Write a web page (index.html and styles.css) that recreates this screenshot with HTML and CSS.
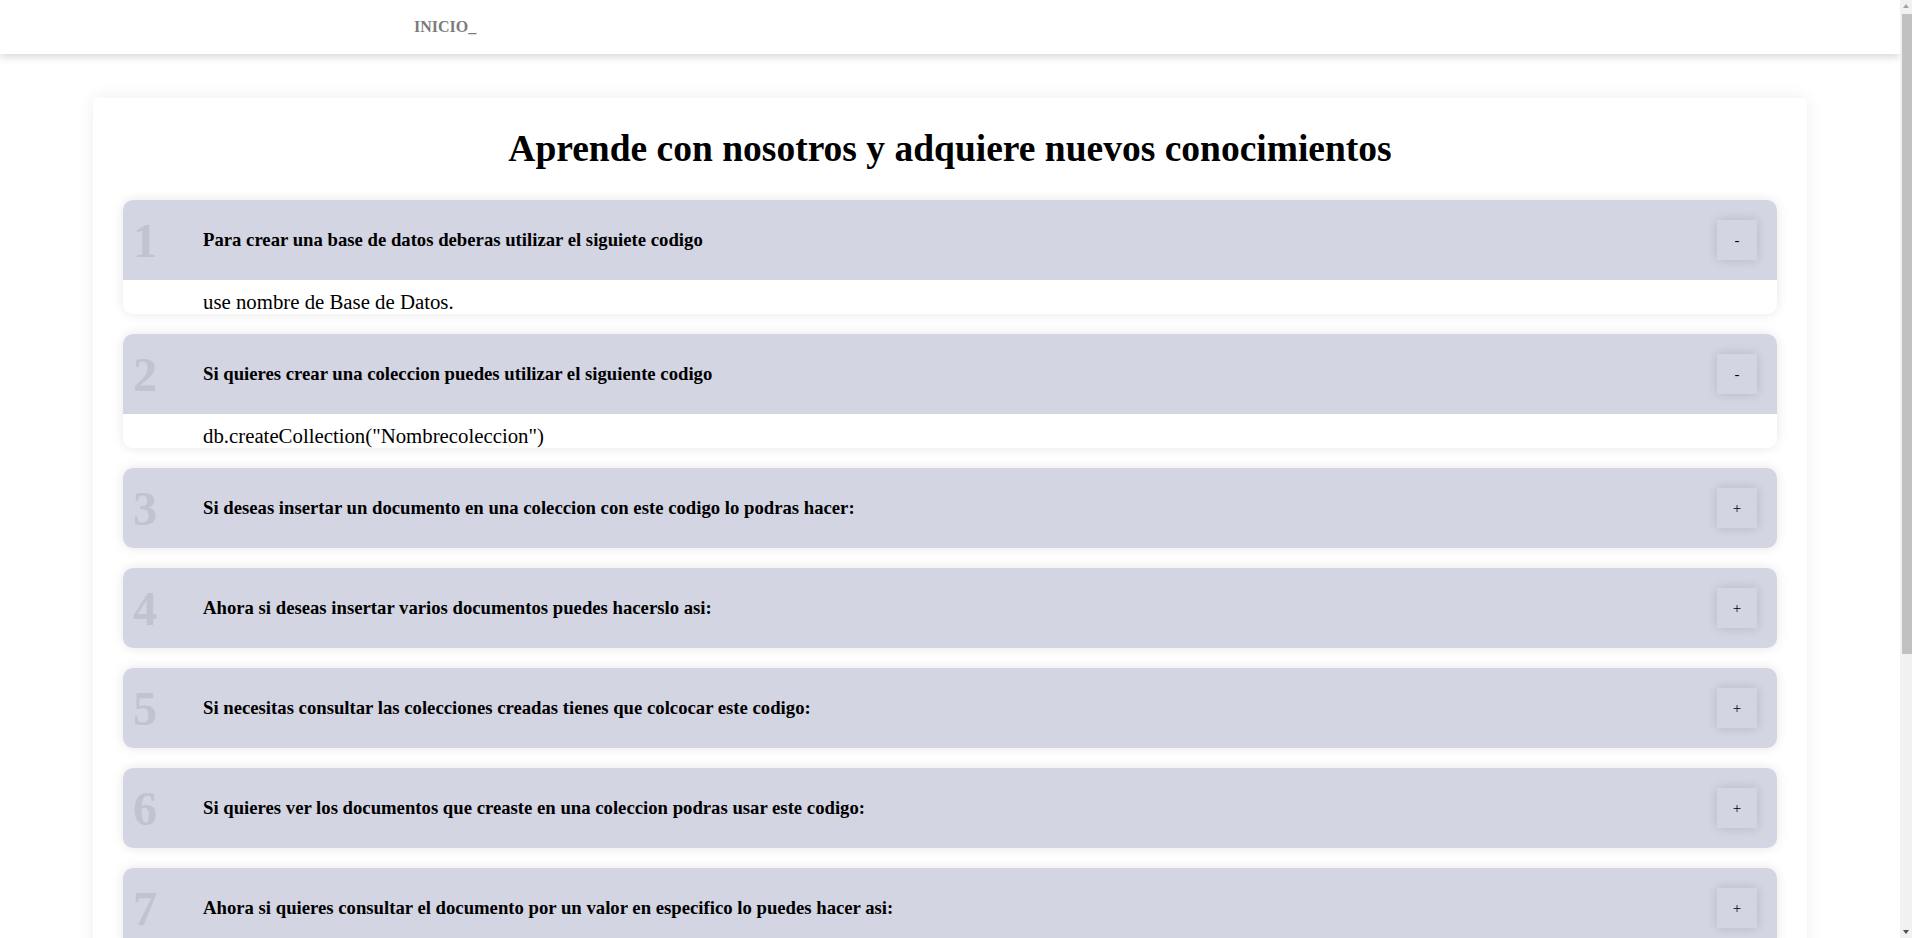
FILE: index.html
```html
<!DOCTYPE html>
<html lang="es">
<head>
<meta charset="utf-8">
<title>Aprende</title>
<link rel="stylesheet" href="styles.css">
</head>
<body>
<div class="page">
  <nav class="navbar">
    <a class="nav-link" href="#">INICIO_</a>
  </nav>
  <main class="card">
    <h1 class="title">Aprende con nosotros y adquiere nuevos conocimientos</h1>
    <div class="list">
      <div class="item open">
        <div class="item-head"><span class="num">1</span><h3 class="q">Para crear una base de datos deberas utilizar el siguiete codigo</h3><button class="toggle">-</button></div>
        <div class="item-body"><p>use nombre de Base de Datos.</p></div>
      </div>
      <div class="item open">
        <div class="item-head"><span class="num">2</span><h3 class="q">Si quieres crear una coleccion puedes utilizar el siguiente codigo</h3><button class="toggle">-</button></div>
        <div class="item-body"><p>db.createCollection("Nombrecoleccion")</p></div>
      </div>
      <div class="item">
        <div class="item-head"><span class="num">3</span><h3 class="q">Si deseas insertar un documento en una coleccion con este codigo lo podras hacer:</h3><button class="toggle">+</button></div>
      </div>
      <div class="item">
        <div class="item-head"><span class="num">4</span><h3 class="q">Ahora si deseas insertar varios documentos puedes hacerslo asi:</h3><button class="toggle">+</button></div>
      </div>
      <div class="item">
        <div class="item-head"><span class="num">5</span><h3 class="q">Si necesitas consultar las colecciones creadas tienes que colcocar este codigo:</h3><button class="toggle">+</button></div>
      </div>
      <div class="item">
        <div class="item-head"><span class="num">6</span><h3 class="q">Si quieres ver los documentos que creaste en una coleccion podras usar este codigo:</h3><button class="toggle">+</button></div>
      </div>
      <div class="item">
        <div class="item-head"><span class="num">7</span><h3 class="q">Ahora si quieres consultar el documento por un valor en especifico lo puedes hacer asi:</h3><button class="toggle">+</button></div>
      </div>
      <div class="item">
        <div class="item-head"><span class="num">8</span><h3 class="q">Si quieres actualizar un documento puedes utilizar este codigo:</h3><button class="toggle">+</button></div>
      </div>
      <div class="item">
        <div class="item-head"><span class="num">9</span><h3 class="q">Si deseas eliminar un documento lo puedes hacer asi:</h3><button class="toggle">+</button></div>
      </div>
      <div class="item">
        <div class="item-head"><span class="num">10</span><h3 class="q">Para eliminar una coleccion deberas utilizar el siguiente codigo:</h3><button class="toggle">+</button></div>
      </div>
    </div>
  </main>
</div>
<div class="scrollbar" aria-hidden="true">
  <div class="sb-arrow sb-up"></div>
  <div class="sb-track"><div class="sb-thumb"></div></div>
  <div class="sb-arrow sb-down"></div>
</div>
</body>
</html>
```

FILE: styles.css
```css
html, body {
  margin: 0;
  padding: 0;
  background: #ffffff;
  font-family: "Liberation Serif", "Times New Roman", serif;
  color: #000;
}

.page {
  margin-right: 12px;
  padding-bottom: 40px;
}

.navbar {
  height: 54px;
  display: flex;
  align-items: center;
  padding-left: 414px;
  background: #ffffff;
  box-shadow: 0 3px 8px rgba(0, 0, 0, 0.16);
  position: relative;
  z-index: 2;
}

.nav-link {
  font-size: 16px;
  font-weight: bold;
  color: #7c7c7c;
  text-decoration: none;
}

.card {
  margin: 44px 93px 0;
  padding: 30px;
  background: #ffffff;
  border-radius: 4px;
  box-shadow: 0 0 18px rgba(0, 0, 0, 0.07);
}

.title {
  margin: 0 0 30px;
  text-align: center;
  font-size: 37.5px;
  font-weight: bold;
  line-height: 42px;
}

.list {
  display: flex;
  flex-direction: column;
  gap: 20px;
}

.item {
  border-radius: 10px;
  overflow: hidden;
  background: #ffffff;
  box-shadow: 0 0 12px rgba(0, 0, 0, 0.1);
}

.item-head {
  height: 80px;
  display: flex;
  align-items: center;
  padding: 0 20px 0 10px;
  background: #d4d5e3;
}

.num {
  width: 70px;
  flex: none;
  font-size: 48px;
  font-weight: bold;
  color: #c1c3d1;
  line-height: normal;
}

.q {
  flex: 1;
  margin: 0;
  font-size: 18.72px;
  font-weight: bold;
  line-height: normal;
}

.toggle {
  width: 40px;
  height: 40px;
  flex: none;
  border: none;
  padding: 0;
  background: #d4d5e3;
  box-shadow: 0 0 10px rgba(0, 0, 0, 0.14);
  font-family: "Liberation Serif", "Times New Roman", serif;
  font-size: 15px;
  color: #000;
}

.item-body {
  height: 34px;
  box-sizing: border-box;
  padding: 10px 0 0 80px;
  overflow: hidden;
  background: #ffffff;
}

.item-body p {
  margin: 0;
  font-size: 20.8px;
  line-height: normal;
}

/* simulated browser scrollbar */
.scrollbar {
  position: fixed;
  top: 0;
  right: 0;
  bottom: 0;
  width: 12px;
  background: #f1f1f1;
  display: flex;
  flex-direction: column;
  z-index: 5;
}

.sb-arrow {
  height: 13px;
  flex: none;
  position: relative;
}

.sb-up::after,
.sb-down::after {
  content: "";
  position: absolute;
  left: 3px;
  border-left: 3px solid transparent;
  border-right: 3px solid transparent;
}

.sb-up::after {
  top: 4px;
  border-bottom: 4px solid #a3a3a3;
}

.sb-down::after {
  top: 5px;
  border-top: 4px solid #505050;
}

.sb-track {
  flex: 1;
  padding: 1px 0 0 2px;
}

.sb-thumb {
  height: 640px;
  background: #c1c1c1;
}
```
